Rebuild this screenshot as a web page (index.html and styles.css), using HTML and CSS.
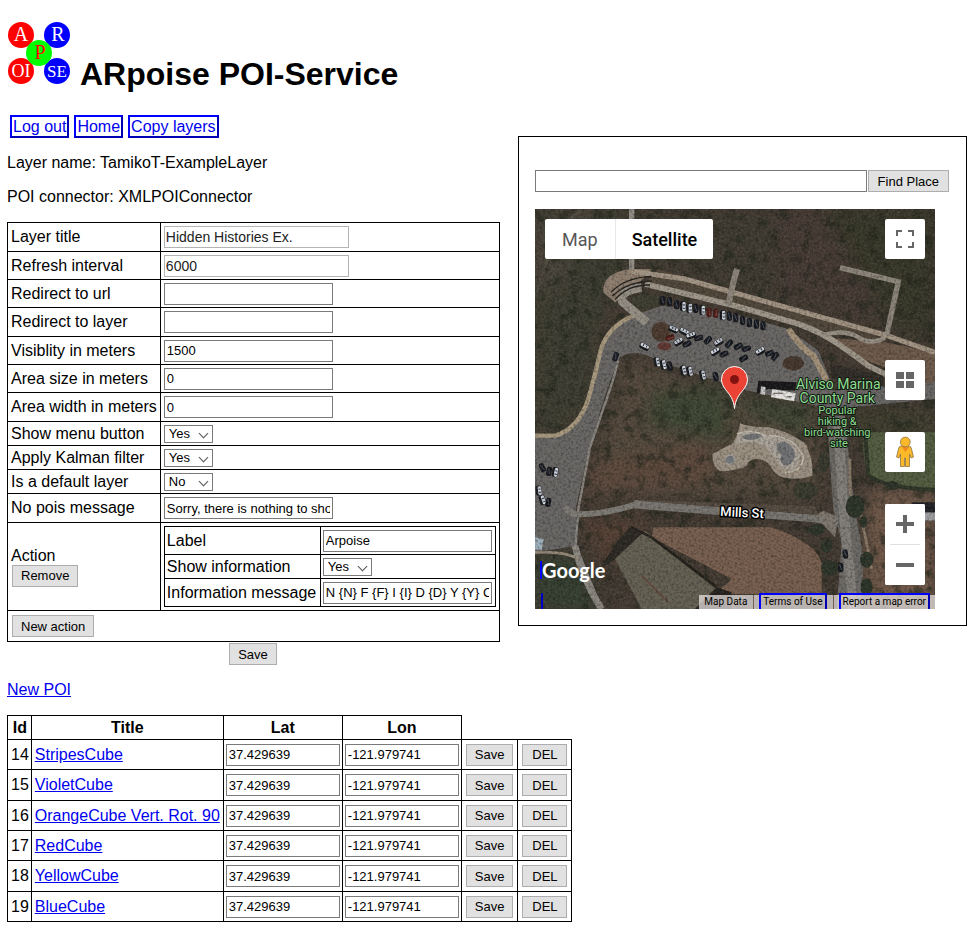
FILE: index.html
```html
<!DOCTYPE html>
<html lang="en">
<head>
<meta charset="utf-8">
<title>ARpoise POI-Service</title>
<link rel="stylesheet" href="styles.css">
</head>
<body>
<h1 class="brand">
  <svg class="logo" viewBox="0 0 64 64" aria-hidden="true">
    <circle cx="14" cy="14" r="13" fill="#f00"/>
    <circle cx="50" cy="14" r="13" fill="#00f"/>
    <circle cx="14" cy="50" r="13" fill="#f00"/>
    <circle cx="50" cy="50" r="13" fill="#00f"/>
    <circle cx="32" cy="32" r="13" fill="#0f0"/>
    <g text-anchor="middle" font-size="20" fill="#fff">
      <text x="14" y="20">A</text>
      <text x="51" y="20">R</text>
      <text x="33" y="38" fill="#f00">P</text>
      <text x="14" y="56" font-size="18">OI</text>
      <text x="50" y="56" font-size="17">SE</text>
    </g>
  </svg>
  <span>ARpoise POI-Service</span>
</h1>

<div class="columns">
  <main class="layer">
    <nav class="links">
      <a class="boxed" href="#logout">Log out</a>
      <a class="boxed" href="#home">Home</a>
      <a class="boxed" href="#copy">Copy layers</a>
    </nav>
    <p>Layer name: TamikoT-ExampleLayer</p>
    <p>POI connector: XMLPOIConnector</p>
    <form>
      <table class="grid settings">
        <tr class="tall"><td class="name"><label for="title">Layer title</label></td><td><input class="field large" id="title" value="Hidden Histories Ex."></td></tr>
        <tr><td><label for="refresh">Refresh interval</label></td><td><input class="field large" id="refresh" value="6000"></td></tr>
        <tr><td><label for="rurl">Redirect to url</label></td><td><input class="field" id="rurl"></td></tr>
        <tr class="tall"><td><label for="rlayer">Redirect to layer</label></td><td><input class="field" id="rlayer"></td></tr>
        <tr><td><label for="vis">Visiblity in meters</label></td><td><input class="field" id="vis" value="1500"></td></tr>
        <tr><td><label for="size">Area size in meters</label></td><td><input class="field" id="size" value="0"></td></tr>
        <tr class="tall"><td><label for="width">Area width in meters</label></td><td><input class="field" id="width" value="0"></td></tr>
        <tr class="short"><td><label for="menu">Show menu button</label></td><td><span class="pick"><select id="menu"><option>Yes</option><option>No</option></select></span></td></tr>
        <tr class="short"><td><label for="kalman">Apply Kalman filter</label></td><td><span class="pick"><select id="kalman"><option>Yes</option><option>No</option></select></span></td></tr>
        <tr class="short"><td><label for="default">Is a default layer</label></td><td><span class="pick"><select id="default"><option>No</option><option>Yes</option></select></span></td></tr>
        <tr class="tall"><td><label for="nopois">No pois message</label></td><td><input class="field" id="nopois" value="Sorry, there is nothing to show here."></td></tr>
        <tr>
          <td>Action<br><button class="btn" type="button">Remove</button></td>
          <td class="holder">
            <table class="grid action">
              <tr><td class="key"><label for="alabel">Label</label></td><td><input class="field" id="alabel" value="Arpoise"></td></tr>
              <tr class="short"><td><label for="ainfo">Show information</label></td><td><span class="pick"><select id="ainfo"><option>Yes</option><option>No</option></select></span></td></tr>
              <tr><td><label for="amsg">Information message</label></td><td><input class="field" id="amsg" value="N {N} F {F} I {I} D {D} Y {Y} C {C}"></td></tr>
            </table>
          </td>
        </tr>
        <tr class="add"><td colspan="2"><button class="btn" type="button">New action</button></td></tr>
      </table>
      <div class="submit"><button class="btn" type="button">Save</button></div>
    </form>
  </main>

  <aside class="panel">
    <form class="search">
      <input class="field place" aria-label="Place">
      <button class="btn flush" type="button">Find Place</button>
    </form>
    <div class="map">
      <svg class="terrain" viewBox="0 0 400 400" role="img" aria-label="Satellite map">
        <defs>
          <filter id="grain" x="0" y="0" width="100%" height="100%" color-interpolation-filters="sRGB">
            <feTurbulence type="fractalNoise" baseFrequency="0.13" numOctaves="3" seed="4"/>
            <feColorMatrix values="0 0 0 0 .04  0 0 0 0 .04  0 0 0 0 .03  2.6 0 0 0 -1.1"/>
          </filter>
          <filter id="glint" x="0" y="0" width="100%" height="100%" color-interpolation-filters="sRGB">
            <feTurbulence type="fractalNoise" baseFrequency="0.15" numOctaves="3" seed="9"/>
            <feColorMatrix values="0 0 0 0 .6  0 0 0 0 .57  0 0 0 0 .5  0 2.4 0 0 -1.1"/>
          </filter>
          <filter id="bush" x="0" y="0" width="100%" height="100%" color-interpolation-filters="sRGB">
            <feTurbulence type="fractalNoise" baseFrequency="0.03" numOctaves="4" seed="12"/>
            <feColorMatrix values="0 0 0 0 .12  0 0 0 0 .14  0 0 0 0 .1  4 0 0 0 -2"/>
          </filter>
          <filter id="soft" x="-20%" y="-20%" width="140%" height="140%"><feGaussianBlur stdDeviation="22"/></filter>
          <pattern id="rows" width="9" height="9" patternUnits="userSpaceOnUse" patternTransform="rotate(-64)"><path d="M0 0V9" stroke="#4c382c" stroke-width="4"/></pattern>
          <g id="dark"><rect x="-8" y="-14" width="16" height="28" rx="6" fill="#16181f"/><path d="M-3-10L3 8" stroke="#4a505c" stroke-width="3"/></g>
          <g id="white"><rect x="-9" y="-15" width="18" height="30" rx="6" fill="#15171c"/><rect x="-2" y="-13" width="10" height="27" rx="4" fill="#d4d9e2"/><path d="M0-4H7M0 6H7" stroke="#2c3544" stroke-width="3"/></g>
          <g id="red"><rect x="-8" y="-14" width="16" height="28" rx="6" fill="#4a1c1a"/><path d="M2-10V9" stroke="#793e38" stroke-width="4"/></g>
        </defs>
        <g transform="scale(.33333)">
          <rect width="1200" height="1200" fill="#443b33"/>
          <g filter="url(#soft)">
            <path d="M0 0H280V170L200 330L170 560L80 670H0Z" fill="#3d3d31"/>
            <path d="M300 0H740V290L300 170Z" fill="#413a31"/>
            <path d="M720 0H1000V320L740 260Z" fill="#463b36"/>
            <path d="M860 0H1200V380L1080 370Z" fill="#39382c"/>
            <path d="M270 440L560 560 850 600 860 860H150Z" fill="#54493d"/>
            <path d="M350 540L580 530V700L330 650ZM600 560L840 590 820 680 640 620Z" fill="#404635"/>
            <path d="M160 760L520 700 540 820 150 860Z" fill="#5d4a3e"/>
            <path d="M930 600H1200V680H960Z" fill="#3d3e2f"/>
            <path d="M1000 840H1200V1200H980Z" fill="#70594a"/>
            <path d="M0 1040L130 1040 190 1200H0Z" fill="#354030"/>
            <path d="M130 930H350L220 1070Z" fill="#544035"/>
            <path d="M0 70L60 0H200L70 230 0 270Z" fill="#49443b"/>
          </g>
          <rect width="1200" height="1200" filter="url(#bush)" opacity=".55"/>
          <path d="M0 270Q45 80 140 0" stroke="#5c554b" stroke-width="8" fill="none" opacity=".5"/>
          <path d="M370 180L1000 365 1040 400 880 370 600 290 330 225Z" fill="#51473b"/>
          <path d="M870 385L1050 400 1200 430V550L1050 475 950 440Z" fill="#6d5a4b"/>
          <path d="M990 670H1200V842Q1060 840 1000 800Q975 720 990 670Z" fill="#535c40"/>
          <path d="M990 670L1000 800Q1060 840 1200 842" fill="none" stroke="#2e3528" stroke-width="12"/>

          <path d="M290 0V190" stroke="#928e88" stroke-width="16"/>
          <path d="M205 250Q200 190 290 180H350L310 225 240 280Z" fill="#8f7f70"/>
          <path d="M290 187L450 210 1050 378 1200 430" fill="none" stroke="#a39585" stroke-width="15"/>
          <path d="M330 225L600 290 790 345Q860 370 910 405T1000 470L1060 500" fill="none" stroke="#a1988c" stroke-width="17"/>
          <path d="M865 378Q930 360 970 385T1050 385" fill="none" stroke="#989085" stroke-width="13"/>
          <path d="M606 180Q595 215 580 290" fill="none" stroke="#8d857b" stroke-width="18"/>
          <path d="M915 176L1090 218 1055 378" fill="none" stroke="#8d867b" stroke-width="16"/>

          <path d="M0 680H60Q130 660 160 570Q180 500 198 420Q220 350 300 318L380 290 600 315 760 360 850 425 880 500 895 545 1200 520V570L890 600 640 545 500 500 370 455Q300 415 255 445Q230 500 200 590L150 770 122 900 125 1010 0 1030Z" fill="#696766"/>
          <path d="M0 680H60Q130 660 160 570Q180 500 198 420Q220 350 300 318" fill="none" stroke="#a8997f" stroke-width="13"/>
          <path d="M335 340L262 278Q250 245 320 236" fill="none" stroke="#959086" stroke-width="26" stroke-linejoin="round"/>
          <path d="M228 250Q270 205 350 202M232 262Q275 218 350 216M240 272Q280 226 345 228" fill="none" stroke="#252320" stroke-width="4"/>
          <path d="M282 278Q295 245 372 262L368 290 325 305Z" fill="#3d3e31"/>
          <path d="M760 360Q800 420 835 440L875 515" fill="none" stroke="#a39279" stroke-width="18"/>
          <path d="M250 455L232 520 165 715 130 900 122 1010 200 1200" fill="none" stroke="#8a8783" stroke-width="7"/>
          <ellipse cx="378" cy="368" rx="29" ry="30" fill="#4c3b30"/>
          <ellipse cx="388" cy="412" rx="21" ry="12" fill="#603733"/>
          <ellipse cx="775" cy="463" rx="32" ry="22" fill="#46382e"/>
          <path d="M885 465L1045 500V530L890 510Z" fill="#302c27"/>

          <path d="M300 873L850 918 930 922 930 958 840 940 290 898Z" fill="#797672"/>
          <path d="M95 900L115 915Q200 920 310 884" fill="none" stroke="#7f7c77" stroke-width="18" stroke-linecap="round"/>
          <path d="M310 872L840 892 850 918 310 875Z" fill="#554b41"/>
          <path d="M875 620H930L950 820 960 900 985 1040 980 1200H905L920 1000 895 900Z" fill="#6b6966"/>
          <path d="M910 650L925 900 955 1200" fill="none" stroke="#827f7b" stroke-width="30"/>
          <path d="M840 920L865 905 910 925 900 985Z" fill="#7d7870"/>
          <path d="M945 750V860M970 880L1010 1080" stroke="#8a7a68" stroke-width="8"/>
          <path d="M120 1010Q140 1110 200 1200" fill="none" stroke="#8c8881" stroke-width="20"/>
          <path d="M0 1030Q90 1025 130 1050" fill="none" stroke="#95897a" stroke-width="8"/>

          <path d="M615 643Q640 655 700 655Q750 665 790 690Q820 705 820 725Q835 760 832 800Q800 812 760 808Q730 805 715 785Q700 755 680 752Q655 745 640 760Q630 780 612 778Q580 790 553 785Q530 770 532 735Q570 715 590 705Q610 680 615 643Z" fill="#9c9183"/>
          <path d="M605 680Q650 655 695 678Q770 680 795 740Q790 790 745 780Q720 750 690 710Q650 690 605 705Z" fill="#aba49b"/>
          <path d="M620 682Q645 670 680 676Q680 690 655 692Q630 695 620 682ZM725 705Q750 690 765 710Q785 725 778 748Q765 775 745 768Q730 755 740 738Q722 730 725 705Z" fill="#717375"/>
          <path d="M605 675Q650 655 700 685M700 680Q780 680 805 745Q800 790 750 790" fill="none" stroke="#c3bcb0" stroke-width="4"/>
          <circle cx="585" cy="752" r="14" fill="#73777a" stroke="#a3a09b" stroke-width="5"/>

          <path d="M355 955H710Q840 1000 860 1060V1155H540L590 1110 350 985Z" fill="#7a6151"/>
          <path d="M355 955H710Q840 1000 860 1060V1155H540L590 1110 350 985Z" fill="url(#rows)" opacity=".28"/>
          <path d="M290 950L350 985 210 1070H200L245 1000Z" fill="#2c2924"/>
          <path d="M330 965L545 1135 480 1200H320L240 1050Z" fill="#646053"/>
          <path d="M290 955L350 985 545 1135" fill="none" stroke="#24211c" stroke-width="8"/>
          <path d="M545 1135L480 1200H590V1150Z" fill="#24211e"/>
          <path d="M320 1100L400 1180" stroke="#60483c" stroke-width="5"/>
          <path d="M1130 880H1200V935H1170V905H1130Z" fill="#1f2025"/>
          <path d="M1170 910H1200V935H1170Z" fill="#a0a0a4"/>
          <path d="M0 985L26 990 20 1022H0Z" fill="#9fb0bd"/>

          <g fill="#2c3328">
            <ellipse cx="960" cy="893" rx="28" ry="34"/><ellipse cx="845" cy="962" rx="24" ry="17"/>
            <ellipse cx="875" cy="1012" rx="17" ry="20"/><ellipse cx="884" cy="1077" rx="26" ry="23"/>
            <ellipse cx="995" cy="1052" rx="20" ry="24"/><ellipse cx="995" cy="1135" rx="18" ry="28"/>
            <ellipse cx="812" cy="845" rx="38" ry="27" opacity=".6"/><ellipse cx="865" cy="760" rx="18" ry="30" opacity=".6"/>
            <ellipse cx="985" cy="938" rx="12" ry="18"/><ellipse cx="1072" cy="830" rx="20" ry="14"/>
          </g>

          <g transform="translate(383 275)">
            <use href="#dark"/><use href="#dark" x="20" y="3"/><use href="#dark" x="42" y="12"/><use href="#white" x="61" y="17"/><use href="#white" x="80" y="22"/><use href="#dark" x="99" y="23"/><use href="#white" x="119" y="28"/><use href="#red" x="139" y="35"/><use href="#red" x="159" y="38"/><use href="#white" x="180" y="43"/><use href="#dark" x="200" y="46"/><use href="#dark" x="219" y="51"/><use href="#dark" x="240" y="59"/><use href="#dark" x="260" y="66"/><use href="#dark" x="281" y="70"/><use href="#dark" x="301" y="75"/>
          </g>
          <g>
            <use href="#white" transform="translate(415 361) rotate(-65)"/><use href="#white" transform="translate(447 368) rotate(-65)"/><use href="#white" transform="translate(468 380) rotate(-110)"/><use href="#white" transform="translate(431 399) rotate(-120)"/><use href="#red" transform="translate(405 386) rotate(70)"/><use href="#dark" transform="translate(456 405) rotate(70)"/><use href="#dark" transform="translate(491 387) rotate(75)"/><use href="#dark" transform="translate(519 394) rotate(45)"/><use href="#white" transform="translate(551 400) rotate(-120)"/><use href="#dark" transform="translate(582 404) rotate(45)"/><use href="#dark" transform="translate(610 412) rotate(65)"/><use href="#dark" transform="translate(634 419) rotate(75)"/><use href="#white" transform="translate(541 428) rotate(-120)"/><use href="#dark" transform="translate(567 435) rotate(70)"/><use href="#dark" transform="translate(626 448) rotate(60)"/><use href="#white" transform="translate(676 427) rotate(-120)"/><use href="#dark" transform="translate(704 433) rotate(75)"/><use href="#dark" transform="translate(720 442) rotate(40)"/>
            <use href="#white" transform="translate(328 413) rotate(-65)"/><use href="#dark" transform="translate(242 443) rotate(20)"/>
            <use href="#white" transform="translate(366 459) rotate(-12)"/><use href="#white" transform="translate(385 467) rotate(-12)"/><use href="#dark" transform="translate(404 471) rotate(-12)"/><use href="#white" transform="translate(445 484) rotate(-12)"/><use href="#white" transform="translate(464 487) rotate(-12)"/><use href="#white" transform="translate(503 498) rotate(-12)"/><use href="#dark" transform="translate(542 503) rotate(-12)"/>
            <use href="#dark" transform="translate(22 776) rotate(-25)"/><use href="#dark" transform="translate(42 787) rotate(12)"/><use href="#white" transform="translate(60 789) rotate(12)"/><use href="#white" transform="translate(11 845) rotate(-8)"/><use href="#white" transform="translate(22 873) rotate(-18)"/><use href="#dark" transform="translate(40 880) rotate(12)"/>
            <use href="#dark" transform="translate(931 1035) rotate(-8)"/><use href="#dark" transform="translate(917 1075) rotate(-4)"/>
          </g>
          <path d="M670 515L785 520 780 545 700 540 665 555Z" fill="#17171a"/>
          <path d="M712 540L782 553 778 577 708 565Z" fill="#e6e5e2"/>
          <path d="M678 532L692 534 690 558 676 555Z" fill="#ccc"/>
          <path d="M715 553H745M755 563H770" stroke="#7c746f" stroke-width="4"/>
          <rect width="1200" height="1200" filter="url(#grain)" opacity=".3"/>
          <rect width="1200" height="1200" filter="url(#glint)" opacity=".2"/>
        </g>
        <text class="poi-name" text-anchor="middle" font-size="14">
          <tspan x="305" y="180">Alviso Marina</tspan>
          <tspan x="304" y="194">County Park</tspan>
          <tspan x="304" y="205" font-size="11">Popular</tspan>
          <tspan x="304" y="216" font-size="11">hiking &amp;</tspan>
          <tspan x="304" y="227" font-size="11">bird-watching</tspan>
          <tspan x="304" y="238" font-size="11">site</tspan>
        </text>
        <text class="street" x="207" y="308" text-anchor="middle" font-size="13" transform="rotate(3 207 304)">Mills St</text>
        <path d="M199.500 199.500C198.500 190 195 186 190.500 180.500C188 177 186.500 174 186.500 170.500A13 13 0 0 1 212.500 170.500C212.500 174 211 177 208.500 180.500C204 186 200.500 190 199.500 199.500Z" fill="#ea4335" stroke="#fff" stroke-width="1"/>
        <circle cx="199.500" cy="170.500" r="4.500" fill="#811411"/>
      </svg>

      <div class="types">
        <button type="button">Map</button>
        <button type="button" class="on">Satellite</button>
      </div>
      <div class="tools">
        <button class="tool full" type="button" aria-label="Fullscreen"><svg viewBox="0 0 18 18"><path d="M0 0H6V2H2V6H0ZM12 0H18V6H16V2H12ZM0 12H2V16H6V18H0ZM16 12H18V18H12V16H16Z"/></svg></button>
        <button class="tool tilt" type="button" aria-label="Rotate map"><svg viewBox="0 0 18 18"><path d="M0 1H8V8H0ZM10 1H18V8H10ZM0 10H8V17H0ZM10 10H18V17H10Z"/></svg></button>
        <button class="tool person" type="button" aria-label="Street View"><svg class="pegman" viewBox="0 0 18 32"><path d="M5 10H13Q15 10 15.500 13L17.500 21L15 22L13.500 18V30.500H9.500V22H8.500V30.500H4.500V18L3 22L.5 21L2.500 13Q3 10 5 10Z" fill="#fbb829" stroke="#8b7449" stroke-width=".8"/><path d="M6 11H13L9.500 16Z" fill="#ef8a22"/><circle cx="9.300" cy="6" r="4.900" fill="#fbb829" stroke="#8b7449" stroke-width=".8"/></svg></button>
        <div class="zoom">
          <button type="button" aria-label="Zoom in"><svg viewBox="0 0 18 18"><path d="M7 0H11V7H18V11H11V18H7V11H0V7H7Z"/></svg></button>
          <button type="button" aria-label="Zoom out"><svg viewBox="0 0 18 18"><path d="M0 7H18V11H0Z"/></svg></button>
        </div>
      </div>
      <a class="google" href="#google">Google</a>
      <span class="edge"></span>
      <div class="legal">
        <span>Map Data</span>
        <span class="bar"><a class="boxed" href="#terms">Terms of Use</a></span>
        <span class="bar wide"><a class="boxed" href="#report">Report a map error</a></span>
      </div>
    </div>
  </aside>
</div>

<p class="new"><a href="#new">New POI</a></p>

<table class="grid pois">
  <thead><tr><th>Id</th><th>Title</th><th>Lat</th><th>Lon</th></tr></thead>
  <tbody>
    <tr><td>14</td><td><a href="#14">StripesCube</a></td><td><input class="field" aria-label="Lat" value="37.429639"></td><td><input class="field" aria-label="Lon" value="-121.979741"></td><td><button class="btn" type="button">Save</button></td><td><button class="btn" type="button">DEL</button></td></tr>
    <tr><td>15</td><td><a href="#15">VioletCube</a></td><td><input class="field" aria-label="Lat" value="37.429639"></td><td><input class="field" aria-label="Lon" value="-121.979741"></td><td><button class="btn" type="button">Save</button></td><td><button class="btn" type="button">DEL</button></td></tr>
    <tr><td>16</td><td><a href="#16">OrangeCube Vert. Rot. 90</a></td><td><input class="field" aria-label="Lat" value="37.429639"></td><td><input class="field" aria-label="Lon" value="-121.979741"></td><td><button class="btn" type="button">Save</button></td><td><button class="btn" type="button">DEL</button></td></tr>
    <tr><td>17</td><td><a href="#17">RedCube</a></td><td><input class="field" aria-label="Lat" value="37.429639"></td><td><input class="field" aria-label="Lon" value="-121.979741"></td><td><button class="btn" type="button">Save</button></td><td><button class="btn" type="button">DEL</button></td></tr>
    <tr><td>18</td><td><a href="#18">YellowCube</a></td><td><input class="field" aria-label="Lat" value="37.429639"></td><td><input class="field" aria-label="Lon" value="-121.979741"></td><td><button class="btn" type="button">Save</button></td><td><button class="btn" type="button">DEL</button></td></tr>
    <tr><td>19</td><td><a href="#19">BlueCube</a></td><td><input class="field" aria-label="Lat" value="37.429639"></td><td><input class="field" aria-label="Lon" value="-121.979741"></td><td><button class="btn" type="button">Save</button></td><td><button class="btn" type="button">DEL</button></td></tr>
  </tbody>
</table>
</body>
</html>
```
FILE: styles.css
```css
* { box-sizing: border-box; }
body {
  margin: 0;
  padding: 21px 10px 8px 7px;
  background: #fff;
  color: #000;
  font: 16px/18px "Liberation Sans", Arial, sans-serif;
}
a { color: #00e; }
p { margin: 16px 0; }

/* header */
.brand {
  display: flex;
  align-items: flex-end;
  gap: 9px;
  margin: 0 0 23px;
  padding-bottom: 7px;
  font-size: 32px;
  line-height: 22px;
}
.logo { width: 64px; height: 64px; font-family: "Liberation Serif", serif; font-weight: normal; }

.columns { display: flex; align-items: flex-start; gap: 19px; }
.layer { flex: none; width: 492px; }
.links { display: flex; gap: 5px; margin-left: 3px; }
.boxed {
  padding: 1px;
  border: 2px solid;
  border-color: #00f #0000b4 #0000b4 #00f;
  line-height: 17px;
  text-decoration: none;
}

/* controls */
.field, .btn, .pick select { font: 13px "Liberation Sans", Arial, sans-serif; color: #000; }
.field {
  display: block;
  width: 169px;
  height: 22px;
  padding: 0 2px;
  border: 1px solid #7a7a7a;
  background: #fff;
}
.field.large { width: 185px; border-color: #b4b4b4; font-size: 14px; padding: 0 1px; color: #222; }
.btn {
  height: 22px;
  min-width: 45px;
  margin: 0 1px;
  padding: 0 8px;
  border: 1px solid #adadad;
  background: #e1e1e1;
}
.btn.flush { flex: none; margin: 0; padding: 0 9px; }
.pick { display: block; position: relative; width: 49px; }
.pick select {
  display: block;
  width: 100%;
  height: 18px;
  padding: 0 4px;
  border: 1px solid #7a7a7a;
  border-radius: 0;
  background: #fff;
  appearance: none;
}
.pick::after {
  content: "";
  position: absolute;
  right: 6px;
  top: 5px;
  width: 6px;
  height: 6px;
  border: solid #555;
  border-width: 0 1px 1px 0;
  transform: rotate(45deg);
  pointer-events: none;
}

/* bordered tables */
.grid { border-collapse: collapse; }
.grid td, .grid th { padding: 0 3px; border: 1px solid #000; white-space: nowrap; }
.grid tr { height: 28px; }
.grid .tall { height: 29px; }
.grid .short { height: 24px; }
.settings { width: 100%; }
.settings .name { width: 152px; }
.settings .add { height: 31px; }
.settings .holder { padding: 3px; }
.action { width: 332px; }
.action .key { width: 156px; }
.action td { padding: 0 2px; }
.submit { display: flex; justify-content: center; padding-top: 1px; }

/* map panel */
.panel {
  flex: 1;
  min-width: 0;
  margin-top: 21px;
  padding: 33px 17px 16px 16px;
  border: 1px solid #000;
}
.search { display: flex; gap: 1px; margin-bottom: 17px; }
.place { flex: 1; min-width: 0; }
.map { position: relative; max-width: 400px; overflow: hidden; font-family: Roboto, sans-serif; }
.terrain { display: block; width: 100%; }
.poi-name, .street { font-family: Roboto, sans-serif; paint-order: stroke; stroke: #101a10; stroke-width: 2px; stroke-linejoin: round; }
.poi-name { fill: #8fdc92; }
.street { fill: #fff; stroke: #000; stroke-width: 3px; font-weight: 500; }
.map button { padding: 0; border: 0; background: #fff; }
.map .types {
  position: absolute;
  left: 10px;
  top: 10px;
  display: flex;
  border-radius: 2px;
  overflow: hidden;
}
.map .types button { height: 40px; padding: 0 17px; font: 18px Roboto, sans-serif; color: #565656; }
.map .types .on { border-left: 1px solid #e8e8e8; padding: 0 16px; color: #000; font-weight: 500; }
.tools {
  position: absolute;
  right: 10px;
  top: 10px;
  bottom: 24px;
  display: flex;
  flex-direction: column;
  gap: 32px;
}
.tools button { display: grid; place-items: center; width: 40px; height: 40px; border-radius: 2px; }
.tools svg { width: 18px; height: 18px; fill: #666; }
.tools .pegman { height: 32px; }
.full { margin-bottom: auto; }
.zoom { border-radius: 2px; background: #fff; }
.zoom button + button { position: relative; margin-top: 1px; }
.zoom button + button::before { content: ""; position: absolute; left: 5px; right: 5px; top: -1px; height: 1px; background: #e0e0e0; }
.google {
  position: absolute;
  left: 5px;
  bottom: 30px;
  border-left: 2px solid #00f;
  color: #fff;
  font: bold 20px/18px Lato, sans-serif;
  text-decoration: none;
}
.edge { position: absolute; left: 6px; bottom: 0; width: 2px; height: 16px; background: #0000c8; }
.legal {
  position: absolute;
  right: 0;
  bottom: 0;
  display: flex;
  height: 14px;
  padding-left: 5px;
  background: rgba(235, 230, 228, .72);
  font-size: 10px;
  line-height: 14px;
  white-space: nowrap;
}
.legal .bar { margin-left: 6px; padding-left: 5px; border-left: 1px solid #6f625c; }
.legal .boxed { display: block; margin-top: -2px; padding: 0 2px; line-height: 14px; color: #000; }
.legal .wide { padding-right: 5px; }

/* POI list */
.new { margin: 16px 0; }
.pois tr { height: 30px; }
.pois tbody tr:nth-child(3n + 2) { height: 31px; }
.pois thead tr { height: 24px; }
.pois th:first-child, .pois td:first-child { padding: 0 2px 0 3px; }
.pois .field { width: 114px; }
.pois td:nth-child(3), .pois td:nth-child(4) { padding: 0 2px; }
```
